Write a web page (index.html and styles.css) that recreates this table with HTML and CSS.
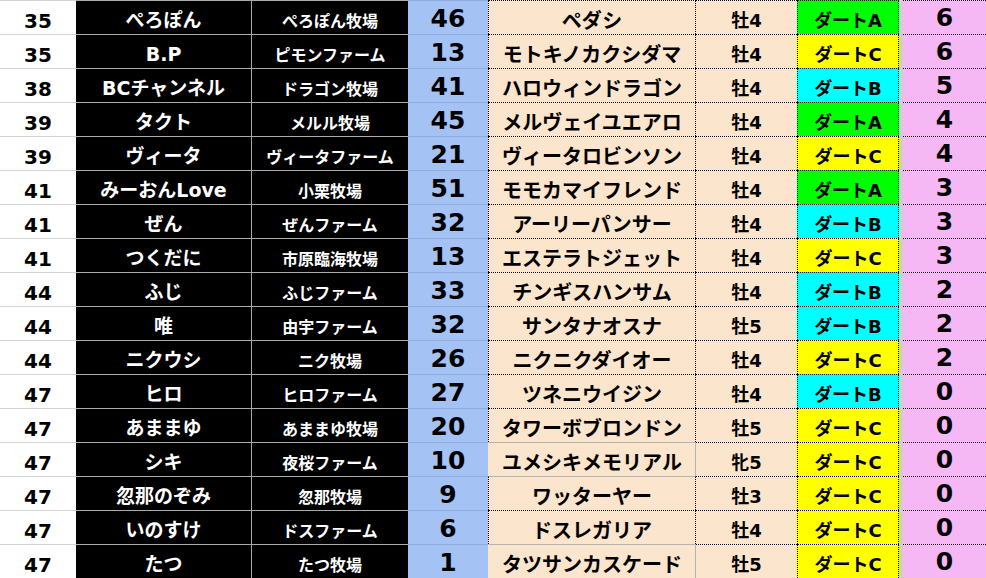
FILE: index.html
```html
<!DOCTYPE html>
<html lang="ja">
<head>
<meta charset="utf-8">
<title>ランキング</title>
<link rel="stylesheet" href="styles.css">
</head>
<body>
<div class="sheet">
  <div class="row"><div class="c rank">35</div><div class="c name">ぺろぽん</div><div class="c ranch">ぺろぽん牧場</div><div class="c num">46</div><div class="c horse">ペダシ</div><div class="c sex">牡4</div><div class="c grade g-a">ダートA</div><div class="c gap"></div><div class="c pt">6</div></div>
  <div class="row"><div class="c rank">35</div><div class="c name">B.P</div><div class="c ranch">ピモンファーム</div><div class="c num">13</div><div class="c horse">モトキノカクシダマ</div><div class="c sex">牡4</div><div class="c grade g-c">ダートC</div><div class="c gap"></div><div class="c pt">6</div></div>
  <div class="row"><div class="c rank">38</div><div class="c name">BCチャンネル</div><div class="c ranch">ドラゴン牧場</div><div class="c num">41</div><div class="c horse">ハロウィンドラゴン</div><div class="c sex">牡4</div><div class="c grade g-b">ダートB</div><div class="c gap"></div><div class="c pt">5</div></div>
  <div class="row"><div class="c rank">39</div><div class="c name">タクト</div><div class="c ranch">メルル牧場</div><div class="c num">45</div><div class="c horse">メルヴェイユエアロ</div><div class="c sex">牡4</div><div class="c grade g-a">ダートA</div><div class="c gap"></div><div class="c pt">4</div></div>
  <div class="row"><div class="c rank">39</div><div class="c name">ヴィータ</div><div class="c ranch">ヴィータファーム</div><div class="c num">21</div><div class="c horse">ヴィータロビンソン</div><div class="c sex">牡4</div><div class="c grade g-c">ダートC</div><div class="c gap"></div><div class="c pt">4</div></div>
  <div class="row"><div class="c rank">41</div><div class="c name">みーおんLove</div><div class="c ranch">小栗牧場</div><div class="c num">51</div><div class="c horse">モモカマイフレンド</div><div class="c sex">牡4</div><div class="c grade g-a">ダートA</div><div class="c gap"></div><div class="c pt">3</div></div>
  <div class="row"><div class="c rank">41</div><div class="c name">ぜん</div><div class="c ranch">ぜんファーム</div><div class="c num">32</div><div class="c horse">アーリーパンサー</div><div class="c sex">牡4</div><div class="c grade g-b">ダートB</div><div class="c gap"></div><div class="c pt">3</div></div>
  <div class="row"><div class="c rank">41</div><div class="c name">つくだに</div><div class="c ranch">市原臨海牧場</div><div class="c num">13</div><div class="c horse">エステラトジェット</div><div class="c sex">牡4</div><div class="c grade g-c">ダートC</div><div class="c gap"></div><div class="c pt">3</div></div>
  <div class="row"><div class="c rank">44</div><div class="c name">ふじ</div><div class="c ranch">ふじファーム</div><div class="c num">33</div><div class="c horse">チンギスハンサム</div><div class="c sex">牡4</div><div class="c grade g-b">ダートB</div><div class="c gap"></div><div class="c pt">2</div></div>
  <div class="row"><div class="c rank">44</div><div class="c name">唯</div><div class="c ranch">由宇ファーム</div><div class="c num">32</div><div class="c horse">サンタナオスナ</div><div class="c sex">牡5</div><div class="c grade g-b">ダートB</div><div class="c gap"></div><div class="c pt">2</div></div>
  <div class="row"><div class="c rank">44</div><div class="c name">ニクウシ</div><div class="c ranch">ニク牧場</div><div class="c num">26</div><div class="c horse">ニクニクダイオー</div><div class="c sex">牡4</div><div class="c grade g-c">ダートC</div><div class="c gap"></div><div class="c pt">2</div></div>
  <div class="row"><div class="c rank">47</div><div class="c name">ヒロ</div><div class="c ranch">ヒロファーム</div><div class="c num">27</div><div class="c horse">ツネニウイジン</div><div class="c sex">牡4</div><div class="c grade g-b">ダートB</div><div class="c gap"></div><div class="c pt">0</div></div>
  <div class="row"><div class="c rank">47</div><div class="c name">あままゆ</div><div class="c ranch">あままゆ牧場</div><div class="c num">20</div><div class="c horse">タワーボブロンドン</div><div class="c sex">牡5</div><div class="c grade g-c">ダートC</div><div class="c gap"></div><div class="c pt">0</div></div>
  <div class="row"><div class="c rank">47</div><div class="c name">シキ</div><div class="c ranch">夜桜ファーム</div><div class="c num">10</div><div class="c horse solid">ユメシキメモリアル</div><div class="c sex">牝5</div><div class="c grade g-c">ダートC</div><div class="c gap"></div><div class="c pt">0</div></div>
  <div class="row"><div class="c rank">47</div><div class="c name">忽那のぞみ</div><div class="c ranch">忽那牧場</div><div class="c num">9</div><div class="c horse solid-top">ワッターヤー</div><div class="c sex">牡3</div><div class="c grade g-c">ダートC</div><div class="c gap"></div><div class="c pt">0</div></div>
  <div class="row"><div class="c rank">47</div><div class="c name">いのすけ</div><div class="c ranch">ドスファーム</div><div class="c num">6</div><div class="c horse">ドスレガリア</div><div class="c sex">牡4</div><div class="c grade g-c">ダートC</div><div class="c gap"></div><div class="c pt">0</div></div>
  <div class="row"><div class="c rank">47</div><div class="c name">たつ</div><div class="c ranch">たつ牧場</div><div class="c num">1</div><div class="c horse solid">タツサンカスケード</div><div class="c sex">牡5</div><div class="c grade g-c">ダートC</div><div class="c gap"></div><div class="c pt">0</div></div>
</div>
</body>
</html>
```

FILE: styles.css
```css
html, body {
  margin: 0;
  padding: 0;
  background: #ffffff;
  overflow: hidden;
}

.sheet {
  display: flex;
  flex-direction: column;
  width: 986px;
  font-family: "DejaVu Sans", "Noto Sans CJK JP", sans-serif;
  font-weight: 700;
  color: #000;
}

.row {
  display: grid;
  grid-template-columns: 76px 176px 156px 80px 208px 101px 102px 4px 83px;
  height: 34px;
}

.c {
  box-sizing: border-box;
  display: flex;
  align-items: center;
  justify-content: center;
  white-space: nowrap;
  line-height: 1;
  border-top: 1px solid #d0d0d0;
}

.rank {
  background: #ffffff;
  font-size: 20px;
  padding-top: 6px;
  border-top-color: #d4d4d4;
}

.name {
  background: #000;
  color: #fff;
  font-size: 19px;
  padding-top: 6px;
  border-top-color: #ababab;
  border-right: 1px solid #ababab;
}

.ranch {
  background: #000;
  color: #fff;
  font-size: 16px;
  padding-top: 9px;
  border-top-color: #ababab;
}

.num {
  background: #a4c2f4;
  font-size: 25px;
  padding-top: 1px;
  border-top-color: #91acdb;
}

.horse {
  background: #fce5cd;
  font-size: 20px;
  padding-top: 6px;
  border-top: 1px dotted #000;
  border-left: 1px dotted #000;
  border-right: 1px dotted #000;
}

.horse.solid {
  border-top: 1px solid #b4b4b4;
  border-right: 1px solid #b4b4b4;
  border-left: 1px solid transparent;
}

.horse.solid-top {
  border-top: 1px solid #b4b4b4;
}

.sex {
  background: #fce5cd;
  font-size: 18px;
  padding-top: 7px;
  border-top: 1px dotted #000;
}

.grade {
  font-size: 18px;
  padding-top: 6px;
  border-top: 1px dotted #000;
  border-left: 1px dotted #000;
  border-right: 1px dotted #000;
}

.g-a { background: #00ff00; }
.g-b { background: #00ffff; }
.g-c { background: #ffff00; }

.gap {
  background: #cfcfcf;
  border-top: 0;
}

.pt {
  background: #f6b7f5;
  font-size: 25px;
  padding-top: 0;
  border-top: 1px dotted #000;
}
```
